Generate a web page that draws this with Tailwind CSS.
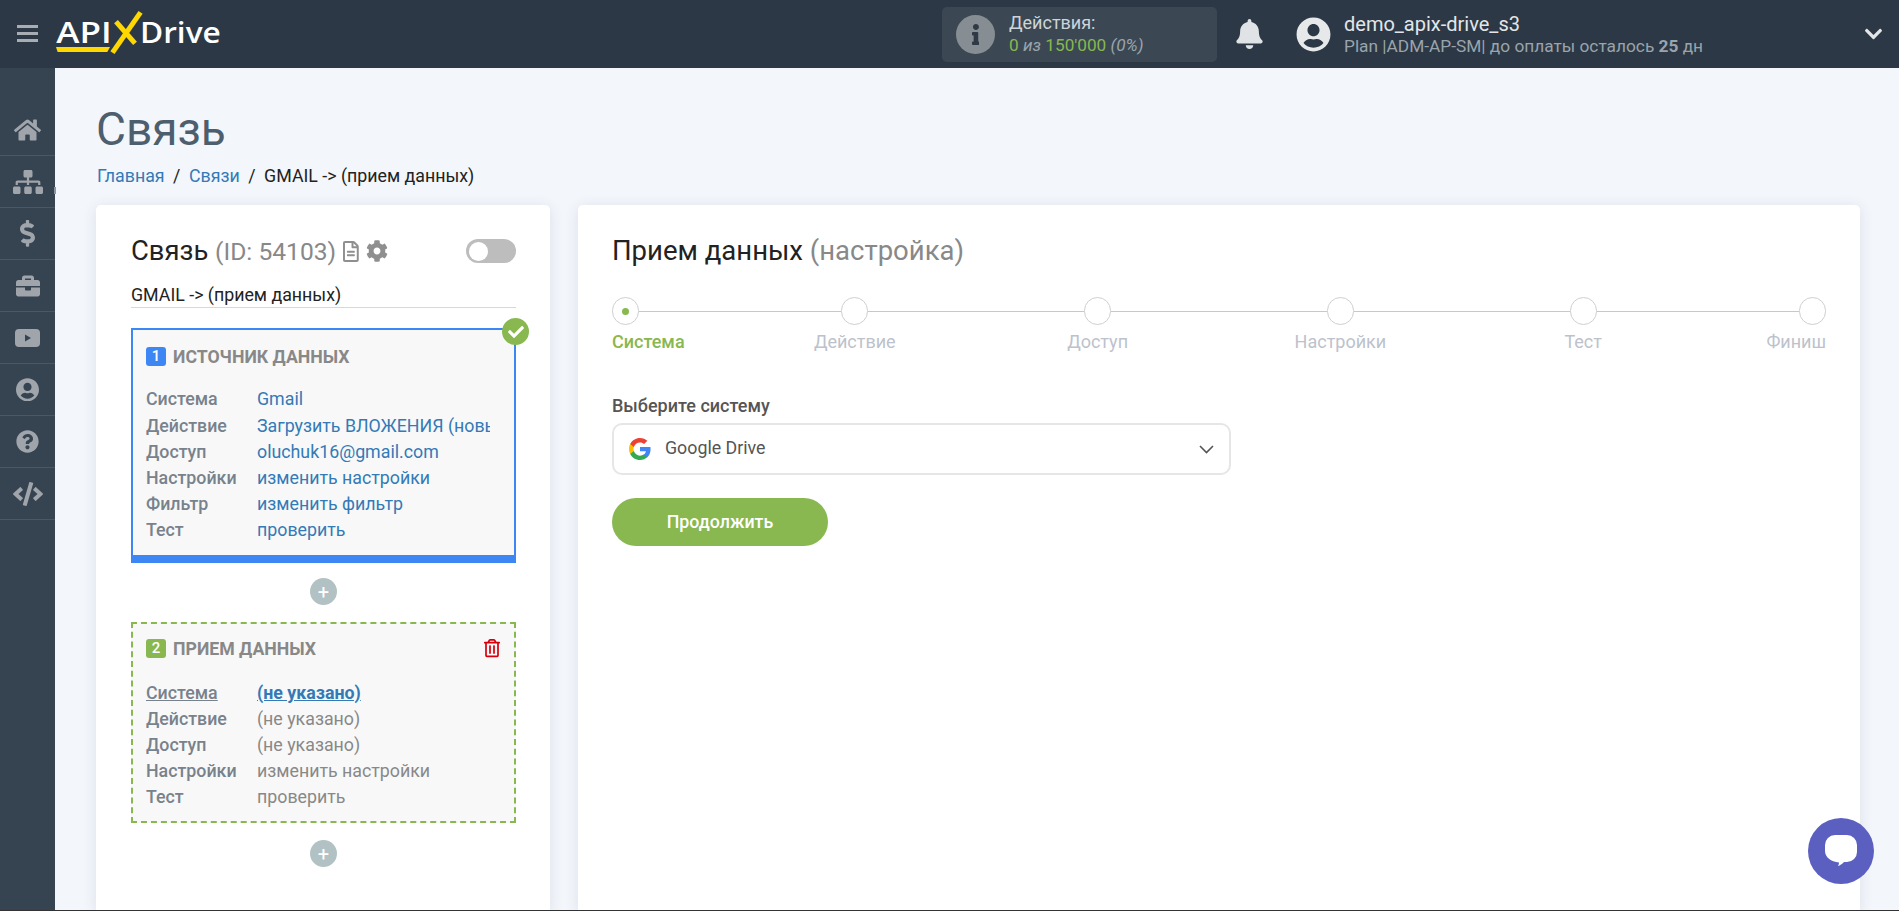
<!DOCTYPE html>
<html lang="ru">

<head>
    <meta charset="UTF-8">
    <title>Связь</title>
    <script src="https://cdn.jsdelivr.net/npm/@tailwindcss/browser@4"></script>
</head>

<body class="w-screen h-screen overflow-hidden bg-[#f3f6fb] font-[Roboto,sans-serif]">
    <div class="relative flex flex-col w-full h-full border-b border-[#333]">
        <!-- top bar -->
        <header class="flex items-center h-[68px] shrink-0 bg-[#2c3845]">
            <div class="flex flex-col justify-between w-[21px] h-[17px] ml-[17px] mb-px">
                <span class="block h-[3px] bg-[#a7adb3]"></span>
                <span class="block h-[3px] bg-[#a7adb3]"></span>
                <span class="block h-[3px] bg-[#a7adb3]"></span>
            </div>
            <div class="relative flex items-center w-[167px] h-[40px] ml-[17px] text-white text-[28px] font-semibold font-['Open_Sans',sans-serif] leading-none">
                <span class="block w-[85px] pl-px mb-[4px] origin-left scale-x-[1.25]">API</span>
                <span class="block mb-[4px] origin-left scale-x-[1.13]">Drive</span>
                <span class="absolute left-[68.5px] top-[-6.5px] w-[5px] h-[49px] bg-[#ffd800] rotate-[35deg]"></span>
                <span class="absolute left-[68px] top-[3.5px] w-[5px] h-[29px] bg-[#ffd800] rotate-[-41deg]"></span>
                <span class="absolute left-px top-[33px] w-[54px] h-[5px] bg-[#ffd800] [clip-path:polygon(0_0,100%_0,95%_100%,3%_100%)]"></span>
            </div>
            <div class="flex items-center w-[275px] h-[55px] ml-[720px] px-[14px] rounded-[5px] bg-[#3b4854]">
                <span class="flex items-center justify-center w-[39px] h-[39px] rounded-full bg-[#868e94]">
                    <svg class="h-[21px] fill-[#2f3a46]" viewBox="0 0 192 512"><path d="M20 424.229h20V279.771H20c-11.046 0-20-8.954-20-20V212c0-11.046 8.954-20 20-20h112c11.046 0 20 8.954 20 20v212.229h20c11.046 0 20 8.954 20 20V492c0 11.046-8.954 20-20 20H20c-11.046 0-20-8.954-20-20v-47.771c0-11.046 8.954-20 20-20zM96 0C56.235 0 24 32.235 24 72s32.235 72 72 72 72-32.235 72-72S135.764 0 96 0z"/></svg>
                </span>
                <div class="ml-[14px]">
                    <div class="text-[18px] leading-[22px] text-[#ced4d8]">Действия:</div>
                    <div class="text-[17.2px] leading-[23px] text-[#88b84f]">0 <i class="text-[#9aa4ac]">из</i> 150'000 <i class="text-[#9aa4ac]">(0%)</i></div>
                </div>
            </div>
            <svg class="w-[27px] h-[30px] ml-[19px] fill-[#e0e3e5]" viewBox="0 0 448 512"><path d="M224 512c35.32 0 63.97-28.65 63.97-64H160.03c0 35.35 28.65 64 63.97 64zm215.39-149.71c-19.32-20.76-55.47-51.99-55.47-154.29 0-77.7-54.48-139.9-127.94-155.16V32c0-17.67-14.32-32-31.98-32s-31.98 14.33-31.98 32v20.84C118.56 68.1 64.08 130.3 64.08 208c0 102.3-36.15 133.53-55.47 154.29-6 6.45-8.66 14.16-8.61 21.71.11 16.4 12.98 32 32.1 32h383.8c19.12 0 32-15.6 32.1-32 .05-7.55-2.61-15.27-8.61-21.71z"/></svg>
            <svg class="w-[35px] h-[35px] ml-[33px] fill-[#e6e8ea]" viewBox="0 0 496 512"><path d="M248 8C111 8 0 119 0 256s111 248 248 248 248-111 248-248S385 8 248 8zm0 96c48.6 0 88 39.4 88 88s-39.4 88-88 88-88-39.4-88-88 39.4-88 88-88zm0 344c-58.7 0-111.3-26.6-146.5-68.2 18.8-35.4 55.6-59.8 98.5-59.8 2.4 0 4.8.4 7.1 1.1 13 4.2 26.6 6.9 40.9 6.9 14.3 0 28-2.7 40.9-6.9 2.3-.7 4.7-1.1 7.1-1.1 42.9 0 79.7 24.4 98.5 59.8C359.3 421.4 306.7 448 248 448z"/></svg>
            <div class="ml-[13px] w-[400px]">
                <div class="text-[20px] leading-[24px] text-[#e3e6e8]">demo_apix-drive_s3</div>
                <div class="text-[17.3px] leading-[21px] text-[#9aa4ac]">Plan |ADM-AP-SM| до оплаты осталось <b class="font-bold">25</b> дн</div>
            </div>
            <svg class="w-[19px] h-[20px] ml-[120px] fill-[#e3e6e8]" viewBox="0 0 448 512"><path d="M207.029 381.476L12.686 187.132c-9.373-9.373-9.373-24.569 0-33.941l22.667-22.667c9.357-9.357 24.522-9.375 33.901-.04L224 284.505l154.745-154.021c9.379-9.335 24.544-9.317 33.901.04l22.667 22.667c9.373 9.373 9.373 24.569 0 33.941L240.971 381.476c-9.373 9.372-24.569 9.372-33.942 0z"/></svg>
        </header>

        <div class="flex flex-1 min-h-0">
            <!-- side menu -->
            <nav class="w-[55px] shrink-0 pt-[36px] bg-[#364351]">
                <a class="flex items-center justify-center h-[52px] border-b border-[#4b5764]">
                    <svg class="w-[27px] fill-[#a0a5ab]" viewBox="0 0 576 512"><path d="M280.37 148.26L96 300.11V464a16 16 0 0 0 16 16l112.06-.29a16 16 0 0 0 15.92-16V368a16 16 0 0 1 16-16h64a16 16 0 0 1 16 16v95.64a16 16 0 0 0 16 16.05L464 480a16 16 0 0 0 16-16V300L295.67 148.26a12.19 12.19 0 0 0-15.3 0zM571.6 251.47L488 182.56V44.05a12 12 0 0 0-12-12h-56a12 12 0 0 0-12 12v72.61L318.47 43a48 48 0 0 0-61 0L4.34 251.47a12 12 0 0 0-1.6 16.9l25.5 31A12 12 0 0 0 45.15 301l235.22-193.74a12.19 12.19 0 0 1 15.3 0L530.9 301a12 12 0 0 0 16.9-1.6l25.5-31a12 12 0 0 0-1.7-16.93z"/></svg>
                </a>
                <a class="flex items-center justify-center h-[52px] border-b border-[#4b5764]">
                    <svg class="w-[30px] fill-[#a0a5ab]" viewBox="0 0 640 512"><path d="M128 352H32c-17.67 0-32 14.33-32 32v96c0 17.67 14.33 32 32 32h96c17.67 0 32-14.33 32-32v-96c0-17.67-14.33-32-32-32zm-24-80h192v48h48v-48h192v48h48v-57.59c0-21.17-17.23-38.41-38.41-38.41H344v-64h40c17.67 0 32-14.33 32-32V32c0-17.67-14.33-32-32-32H256c-17.67 0-32 14.33-32 32v96c0 17.67 14.33 32 32 32h40v64H94.41C73.23 224 56 241.23 56 262.41V320h48v-48zm264 80h-96c-17.67 0-32 14.33-32 32v96c0 17.67 14.33 32 32 32h96c17.67 0 32-14.33 32-32v-96c0-17.67-14.33-32-32-32zm240 0h-96c-17.67 0-32 14.33-32 32v96c0 17.67 14.33 32 32 32h96c17.67 0 32-14.33 32-32v-96c0-17.67-14.33-32-32-32z"/></svg>
                </a>
                <a class="flex items-center justify-center h-[52px] border-b border-[#4b5764]">
                    <svg class="w-[15px] fill-[#a0a5ab]" viewBox="0 0 288 512"><path d="M209.2 233.4l-108-31.6C88.7 198.2 80 186.5 80 173.5c0-16.3 13.2-29.5 29.5-29.5h66.3c12.2 0 24.2 3.7 34.2 10.5 6.1 4.1 14.3 3.1 19.5-2l34.8-34c7.1-6.9 6.1-18.4-1.8-24.5C238 74.8 207.4 64.1 176 64V16c0-8.8-7.2-16-16-16h-32c-8.8 0-16 7.2-16 16v48h-2.5C45.8 64-5.4 118.7.5 183.6c4.2 46.1 39.4 83.6 83.8 96.6l102.5 30c12.5 3.7 21.2 15.3 21.2 28.3 0 16.3-13.2 29.5-29.5 29.5h-66.3C100 368 88 364.3 78 357.5c-6.1-4.1-14.3-3.1-19.5 2l-34.8 34c-7.1 6.9-6.1 18.4 1.8 24.5 24.5 19.2 55.1 29.9 86.5 30v48c0 8.8 7.2 16 16 16h32c8.8 0 16-7.2 16-16v-48.2c46.6-.9 90.3-28.6 105.7-72.7 21.5-61.6-14.6-124.8-72.5-141.7z"/></svg>
                </a>
                <a class="flex items-center justify-center h-[52px] border-b border-[#4b5764]">
                    <svg class="w-[24px] fill-[#a0a5ab]" viewBox="0 0 512 512"><path d="M320 336c0 8.84-7.16 16-16 16h-96c-8.84 0-16-7.16-16-16v-48H0v144c0 25.6 22.4 48 48 48h416c25.6 0 48-22.4 48-48V288H320v48zm144-208h-80V80c0-25.6-22.4-48-48-48H176c-25.6 0-48 22.4-48 48v48H48c-25.6 0-48 22.4-48 48v80h512v-80c0-25.6-22.4-48-48-48zm-144 0H192V96h128v32z"/></svg>
                </a>
                <a class="flex items-center justify-center h-[52px] border-b border-[#4b5764]">
                    <svg class="w-[25px] h-[18px]" viewBox="0 0 25 18"><rect width="25" height="18" rx="4" fill="#a0a5ab"/><path d="M10 5.5l6 3.5-6 3.500z" fill="#364351"/></svg>
                </a>
                <a class="flex items-center justify-center h-[52px] border-b border-[#4b5764]">
                    <svg class="w-[23px] fill-[#a0a5ab]" viewBox="0 0 496 512"><path d="M248 8C111 8 0 119 0 256s111 248 248 248 248-111 248-248S385 8 248 8zm0 96c48.6 0 88 39.4 88 88s-39.4 88-88 88-88-39.4-88-88 39.4-88 88-88zm0 344c-58.7 0-111.3-26.6-146.5-68.2 18.8-35.4 55.6-59.8 98.5-59.8 2.4 0 4.8.4 7.1 1.1 13 4.2 26.6 6.9 40.9 6.9 14.3 0 28-2.7 40.9-6.9 2.3-.7 4.7-1.1 7.1-1.1 42.9 0 79.7 24.4 98.5 59.8C359.3 421.4 306.7 448 248 448z"/></svg>
                </a>
                <a class="flex items-center justify-center h-[52px] border-b border-[#4b5764]">
                    <svg class="w-[23px] fill-[#a0a5ab]" viewBox="0 0 512 512"><path d="M504 256c0 136.997-111.043 248-248 248S8 392.997 8 256C8 119.083 119.043 8 256 8s248 111.083 248 248zM262.655 90c-54.497 0-89.255 22.957-116.549 63.758-3.536 5.286-2.353 12.415 2.715 16.258l34.699 26.31c5.205 3.947 12.621 3.008 16.665-2.122 17.864-22.658 30.113-35.797 57.303-35.797 20.429 0 45.698 13.148 45.698 32.958 0 14.976-12.363 22.667-32.534 33.976C247.128 238.528 216 254.941 216 296v4c0 6.627 5.373 12 12 12h56c6.627 0 12-5.373 12-12v-1.333c0-28.462 83.186-29.647 83.186-106.667 0-58.002-60.165-102-116.531-102zM256 338c-25.365 0-46 20.635-46 46 0 25.364 20.635 46 46 46s46-20.636 46-46c0-25.365-20.635-46-46-46z"/></svg>
                </a>
                <a class="flex items-center justify-center h-[52px] border-b border-[#4b5764]">
                    <svg class="w-[30px] fill-[#a0a5ab]" viewBox="0 0 640 512"><path d="M278.9 511.5l-61-17.7c-6.4-1.8-10-8.5-8.2-14.9L346.2 8.7c1.8-6.4 8.5-10 14.9-8.2l61 17.7c6.4 1.8 10 8.5 8.2 14.9L293.8 503.3c-1.9 6.4-8.5 10.1-14.9 8.2zm-114-112.2l43.5-46.4c4.6-4.9 4.3-12.7-.8-17.2L117 256l90.6-79.7c5.1-4.5 5.5-12.3.8-17.2l-43.5-46.4c-4.5-4.8-12.1-5.1-17-.5L3.8 247.2c-5.1 4.7-5.1 12.8 0 17.5l144.1 135.1c4.9 4.6 12.5 4.4 17-.5zm327.2.6l144.1-135.1c5.1-4.7 5.1-12.8 0-17.5L492.1 112.1c-4.8-4.5-12.4-4.3-17 .5L431.6 159c-4.6 4.9-4.3 12.7.8 17.2L523 256l-90.6 79.7c-5.1 4.5-5.5 12.3-.8 17.2l43.5 46.4c4.5 4.9 12.1 5.1 17 .6z"/></svg>
                </a>
            </nav>

            <main class="flex-1 min-w-0 flex flex-col pl-[41px] pr-[39px]">
                <h1 class="mt-[36px] text-[46px] leading-[50px] font-normal text-[#4d5f6e]">Связь</h1>
                <div class="mt-[10px] pl-px flex items-center gap-[8.5px] text-[17.8px] leading-[24px] text-[#222]">
                    <a class="text-[#337ab7]">Главная</a><span>/</span><a class="text-[#337ab7]">Связи</a><span>/</span><span>GMAIL -&gt; (прием данных)</span>
                </div>

                <div class="flex flex-1 min-h-0 gap-[28px] mt-[17px]">
                    <!-- connection card -->
                    <section class="w-[454px] shrink-0 pt-[30px] pl-[35px] pr-[34px] rounded-t-[5px] bg-white shadow-[0_2px_14px_rgba(60,80,110,0.12)]">
                        <div class="flex items-center h-[32px]">
                            <span class="text-[27.4px] leading-[32px] text-[#222]">Связь <span class="text-[24.6px] text-[#888]">(ID: 54103)</span></span>
                            <svg class="h-[21px] ml-[7px] fill-[#8f8f8f]" viewBox="0 0 384 512"><path d="M288 248v28c0 6.6-5.4 12-12 12H108c-6.6 0-12-5.4-12-12v-28c0-6.6 5.4-12 12-12h168c6.6 0 12 5.4 12 12zm-12 72H108c-6.6 0-12 5.4-12 12v28c0 6.6 5.4 12 12 12h168c6.6 0 12-5.4 12-12v-28c0-6.6-5.4-12-12-12zm108-188.1V464c0 26.5-21.5 48-48 48H48c-26.500 0-48-21.5-48-48V48C0 21.5 21.5 0 48 0h204.1C264.8 0 277 5.1 286 14.1L369.9 98c9 8.9 14.1 21.2 14.1 33.9zm-128-80V128h76.1L256 51.9zM336 464V176H232c-13.3 0-24-10.7-24-24V48H48v416h288z"/></svg>
                            <svg class="w-[22px] h-[22px] ml-[7px] fill-[#8f8f8f]" viewBox="0 0 512 512"><path d="M487.4 315.7l-42.6-24.6c4.3-23.2 4.3-47 0-70.2l42.6-24.6c4.9-2.8 7.1-8.6 5.5-14-11.1-35.6-30-67.8-54.7-94.6-3.8-4.1-10-5.1-14.8-2.3L380.8 110c-17.9-15.4-38.5-27.3-60.8-35.1V25.8c0-5.6-3.9-10.5-9.4-11.7-36.7-8.2-74.3-7.8-109.2 0-5.5 1.2-9.4 6.1-9.4 11.7V75c-22.2 7.9-42.8 19.8-60.8 35.1L88.7 85.5c-4.9-2.8-11-1.9-14.8 2.3-24.7 26.7-43.6 58.9-54.7 94.6-1.7 5.4.6 11.2 5.5 14L67.3 221c-4.3 23.2-4.3 47 0 70.2l-42.6 24.6c-4.9 2.8-7.1 8.6-5.5 14 11.1 35.6 30 67.8 54.7 94.6 3.8 4.1 10 5.1 14.8 2.3l42.6-24.6c17.9 15.4 38.5 27.3 60.8 35.1v49.2c0 5.6 3.9 10.5 9.4 11.7 36.7 8.2 74.3 7.8 109.2 0 5.5-1.2 9.4-6.1 9.4-11.7v-49.2c22.2-7.9 42.8-19.8 60.8-35.1l42.6 24.6c4.9 2.8 11 1.9 14.8-2.3 24.7-26.7 43.6-58.9 54.7-94.6 1.5-5.5-.7-11.3-5.6-14.1zM256 336c-44.1 0-80-35.9-80-80s35.9-80 80-80 80 35.9 80 80-35.9 80-80 80z"/></svg>
                            <span class="flex items-center w-[50px] h-[24px] ml-auto px-[3px] rounded-full bg-[#bdbdbd]">
                                <span class="block w-[19px] h-[19px] rounded-full bg-white"></span>
                            </span>
                        </div>
                        <div class="mt-[16px] h-[25px] border-b border-[#d8d8d8] text-[17.8px] leading-[24px] text-[#222]">GMAIL -&gt; (прием данных)</div>

                        <!-- step 1 -->
                        <div class="relative mt-[20px] pt-[17px] pl-[13px] pr-[14px] pb-[13px] border-2 border-b-[8px] border-[#3d87f5] bg-[#f8f8f8]">
                            <span class="absolute right-[-15px] top-[-12px] flex items-center justify-center w-[27px] h-[27px] rounded-full bg-[#88b84f]">
                                <svg class="w-[16px] fill-white" viewBox="0 0 512 512"><path d="M173.898 439.404l-166.4-166.4c-9.997-9.997-9.997-26.206 0-36.204l36.203-36.204c9.997-9.998 26.207-9.998 36.204 0L192 312.69 432.095 72.596c9.997-9.997 26.207-9.997 36.204 0l36.203 36.204c9.997 9.997 9.997 26.206 0 36.204l-294.4 294.401c-9.998 9.997-26.207 9.997-36.204-.001z"/></svg>
                            </span>
                            <div class="flex items-center h-[19px] text-[17.7px] font-bold text-[#888]">
                                <span class="flex items-center justify-center w-[20px] h-[19px] mr-[7px] rounded-[3px] bg-[#3d87f5] text-[15px] font-medium text-white">1</span><span class="mt-[2px]">ИСТОЧНИК ДАННЫХ</span>
                            </div>
                            <dl class="grid grid-cols-[111px_233px] auto-rows-[26px] mt-[20px] text-[17.8px] leading-[26px]">
                                <dt class="font-medium text-[#78828c]">Система</dt><dd class="text-[#337ab7]">Gmail</dd>
                                <dt class="font-medium text-[#78828c] mt-px">Действие</dt><dd class="text-[#337ab7] mt-px overflow-hidden whitespace-nowrap">Загрузить ВЛОЖЕНИЯ (новые)</dd>
                                <dt class="font-medium text-[#78828c] mt-px">Доступ</dt><dd class="text-[#337ab7] mt-px">oluchuk16@gmail.com</dd>
                                <dt class="font-medium text-[#78828c] mt-px">Настройки</dt><dd class="text-[#337ab7] mt-px">изменить настройки</dd>
                                <dt class="font-medium text-[#78828c] mt-px">Фильтр</dt><dd class="text-[#337ab7] mt-px">изменить фильтр</dd>
                                <dt class="font-medium text-[#78828c] mt-px">Тест</dt><dd class="text-[#337ab7] mt-px">проверить</dd>
                            </dl>
                        </div>

                        <div class="flex items-center justify-center w-[27px] h-[27px] mx-auto mt-[15px] rounded-full bg-[#b2c2c4] text-[20px] leading-none text-white">+</div>

                        <!-- step 2 -->
                        <div class="mt-[17px] pt-[15px] pl-[13px] pr-[14px] pb-[11px] border-2 border-dashed border-[#88b84f] bg-[#f8f8f8]">
                            <div class="flex items-center h-[19px] text-[17.7px] font-bold text-[#888]">
                                <span class="flex items-center justify-center w-[20px] h-[19px] mr-[7px] rounded-[3px] bg-[#88b84f] text-[15px] font-medium text-white">2</span><span class="mt-[2px]">ПРИЕМ ДАННЫХ</span>
                                <svg class="w-[16px] ml-auto fill-[#d9000d]" viewBox="0 0 448 512"><path d="M268 416h24a12 12 0 0 0 12-12V188a12 12 0 0 0-12-12h-24a12 12 0 0 0-12 12v216a12 12 0 0 0 12 12zM432 80h-82.41l-34-56.7A48 48 0 0 0 274.41 0H173.59a48 48 0 0 0-41.16 23.3L98.41 80H16A16 16 0 0 0 0 96v16a16 16 0 0 0 16 16h16v336a48 48 0 0 0 48 48h288a48 48 0 0 0 48-48V128h16a16 16 0 0 0 16-16V96a16 16 0 0 0-16-16zM171.84 50.91A6 6 0 0 1 177 48h94a6 6 0 0 1 5.15 2.91L293.61 80H154.39zM368 464H80V128h288zm-212-48h24a12 12 0 0 0 12-12V188a12 12 0 0 0-12-12h-24a12 12 0 0 0-12 12v216a12 12 0 0 0 12 12z"/></svg>
                            </div>
                            <dl class="grid grid-cols-[111px_233px] auto-rows-[26px] mt-[22px] text-[17.8px] leading-[26px]">
                                <dt class="font-medium text-[#78828c] underline">Система</dt><dd class="font-bold text-[#337ab7] underline">(не указано)</dd>
                                <dt class="font-medium text-[#78828c]">Действие</dt><dd class="text-[#888]">(не указано)</dd>
                                <dt class="font-medium text-[#78828c]">Доступ</dt><dd class="text-[#888]">(не указано)</dd>
                                <dt class="font-medium text-[#78828c]">Настройки</dt><dd class="text-[#888]">изменить настройки</dd>
                                <dt class="font-medium text-[#78828c]">Тест</dt><dd class="text-[#888]">проверить</dd>
                            </dl>
                        </div>

                        <div class="flex items-center justify-center w-[27px] h-[27px] mx-auto mt-[17px] rounded-full bg-[#b2c2c4] text-[20px] leading-none text-white">+</div>
                    </section>

                    <!-- system form -->
                    <section class="flex-1 min-w-0 pt-[30px] pl-[34px] pr-[34px] rounded-t-[5px] bg-white shadow-[0_2px_14px_rgba(60,80,110,0.12)]">
                        <h2 class="text-[27.5px] leading-[32px] font-normal text-[#222]">Прием данных <span class="text-[#888]">(настройка)</span></h2>

                        <div class="relative grid grid-cols-[1fr_2fr_2fr_2fr_2fr_1fr] mt-[30px]">
                            <div class="absolute left-0 right-0 top-[14px] h-px bg-[#c8c8c8]"></div>
                            <div class="relative flex flex-col items-start">
                                <span class="flex items-center justify-center w-[27px] h-[28px] rounded-full border border-[#cfcfcf] bg-white"><span class="block w-[7px] h-[7px] rounded-full bg-[#88b84f]"></span></span>
                                <span class="mt-[4px] text-[18px] leading-[26px] font-medium text-[#88b84f]">Система</span>
                            </div>
                            <div class="relative flex flex-col items-center">
                                <span class="w-[27px] h-[28px] rounded-full border border-[#cfcfcf] bg-white"></span>
                                <span class="mt-[4px] text-[18px] leading-[26px] text-[#bcc2cc]">Действие</span>
                            </div>
                            <div class="relative flex flex-col items-center">
                                <span class="w-[27px] h-[28px] rounded-full border border-[#cfcfcf] bg-white"></span>
                                <span class="mt-[4px] text-[18px] leading-[26px] text-[#bcc2cc]">Доступ</span>
                            </div>
                            <div class="relative flex flex-col items-center">
                                <span class="w-[27px] h-[28px] rounded-full border border-[#cfcfcf] bg-white"></span>
                                <span class="mt-[4px] text-[18px] leading-[26px] text-[#bcc2cc]">Настройки</span>
                            </div>
                            <div class="relative flex flex-col items-center">
                                <span class="w-[27px] h-[28px] rounded-full border border-[#cfcfcf] bg-white"></span>
                                <span class="mt-[4px] text-[18px] leading-[26px] text-[#bcc2cc]">Тест</span>
                            </div>
                            <div class="relative flex flex-col items-end">
                                <span class="w-[27px] h-[28px] rounded-full border border-[#cfcfcf] bg-white"></span>
                                <span class="mt-[4px] text-[18px] leading-[26px] text-[#bcc2cc]">Финиш</span>
                            </div>
                        </div>

                        <label class="block mt-[39px] text-[18px] leading-[24px] font-medium text-[#555]">Выберите систему</label>
                        <div class="flex items-center w-[619px] h-[52px] mt-[5px] pl-[14px] pr-[15px] rounded-[10px] border-2 border-[#e6e6e6] text-[17.8px] text-[#555]">
                            <svg class="w-[24px] h-[24px]" viewBox="0 0 24 24"><path fill="#4285F4" d="M22.56 12.25c0-.78-.07-1.53-.2-2.25H12v4.26h5.92c-.26 1.37-1.04 2.53-2.21 3.31v2.77h3.57c2.08-1.92 3.28-4.74 3.28-8.09z"/><path fill="#34A853" d="M12 23c2.97 0 5.46-.98 7.28-2.66l-3.57-2.77c-.98.66-2.23 1.06-3.71 1.06-2.86 0-5.29-1.93-6.16-4.53H2.18v2.84C3.99 20.53 7.7 23 12 23z"/><path fill="#FBBC05" d="M5.84 14.09c-.22-.66-.35-1.36-.35-2.09s.13-1.43.35-2.09V7.07H2.18C1.43 8.55 1 10.22 1 12s.43 3.45 1.18 4.93l2.85-2.22.81-.62z"/><path fill="#EA4335" d="M12 5.38c1.62 0 3.06.56 4.21 1.64l3.15-3.15C17.45 2.09 14.97 1 12 1 7.7 1 3.99 3.47 2.18 7.07l3.66 2.84c.87-2.6 3.3-4.53 6.16-4.53z"/></svg>
                            <span class="ml-[13px] mb-px">Google Drive</span>
                            <svg class="w-[15px] h-[9px] ml-auto fill-none stroke-[#555] stroke-[1.6]" viewBox="0 0 15 9"><path d="M1 1l6.5 6.5L14 1"/></svg>
                        </div>
                        <button class="block w-[216px] h-[48px] mt-[23px] rounded-full bg-[#88b84f] text-[17.8px] font-medium text-white">Продолжить</button>
                    </section>
                </div>
            </main>
        </div>

        <!-- edge marker next to the menu -->
        <span class="absolute left-[54px] top-[187px] w-[2px] h-[7px] bg-[#8a949c]"></span>

        <!-- chat widget -->
        <div class="absolute left-[1808px] top-[818px] flex items-center justify-center w-[66px] h-[66px] rounded-full bg-[#5b5fc0]">
            <svg class="w-[32px] h-[32px] fill-white" viewBox="0 0 32 32"><path d="M10 0h12a10 10 0 0 1 10 10v7a10 10 0 0 1-10 10h-3c-2 2-4 3.5-6 4 .5-1 1-2 1-3.5C6 27 0 22 0 16v-6A10 10 0 0 1 10 0z"/></svg>
        </div>
    </div>
</body>

</html>
